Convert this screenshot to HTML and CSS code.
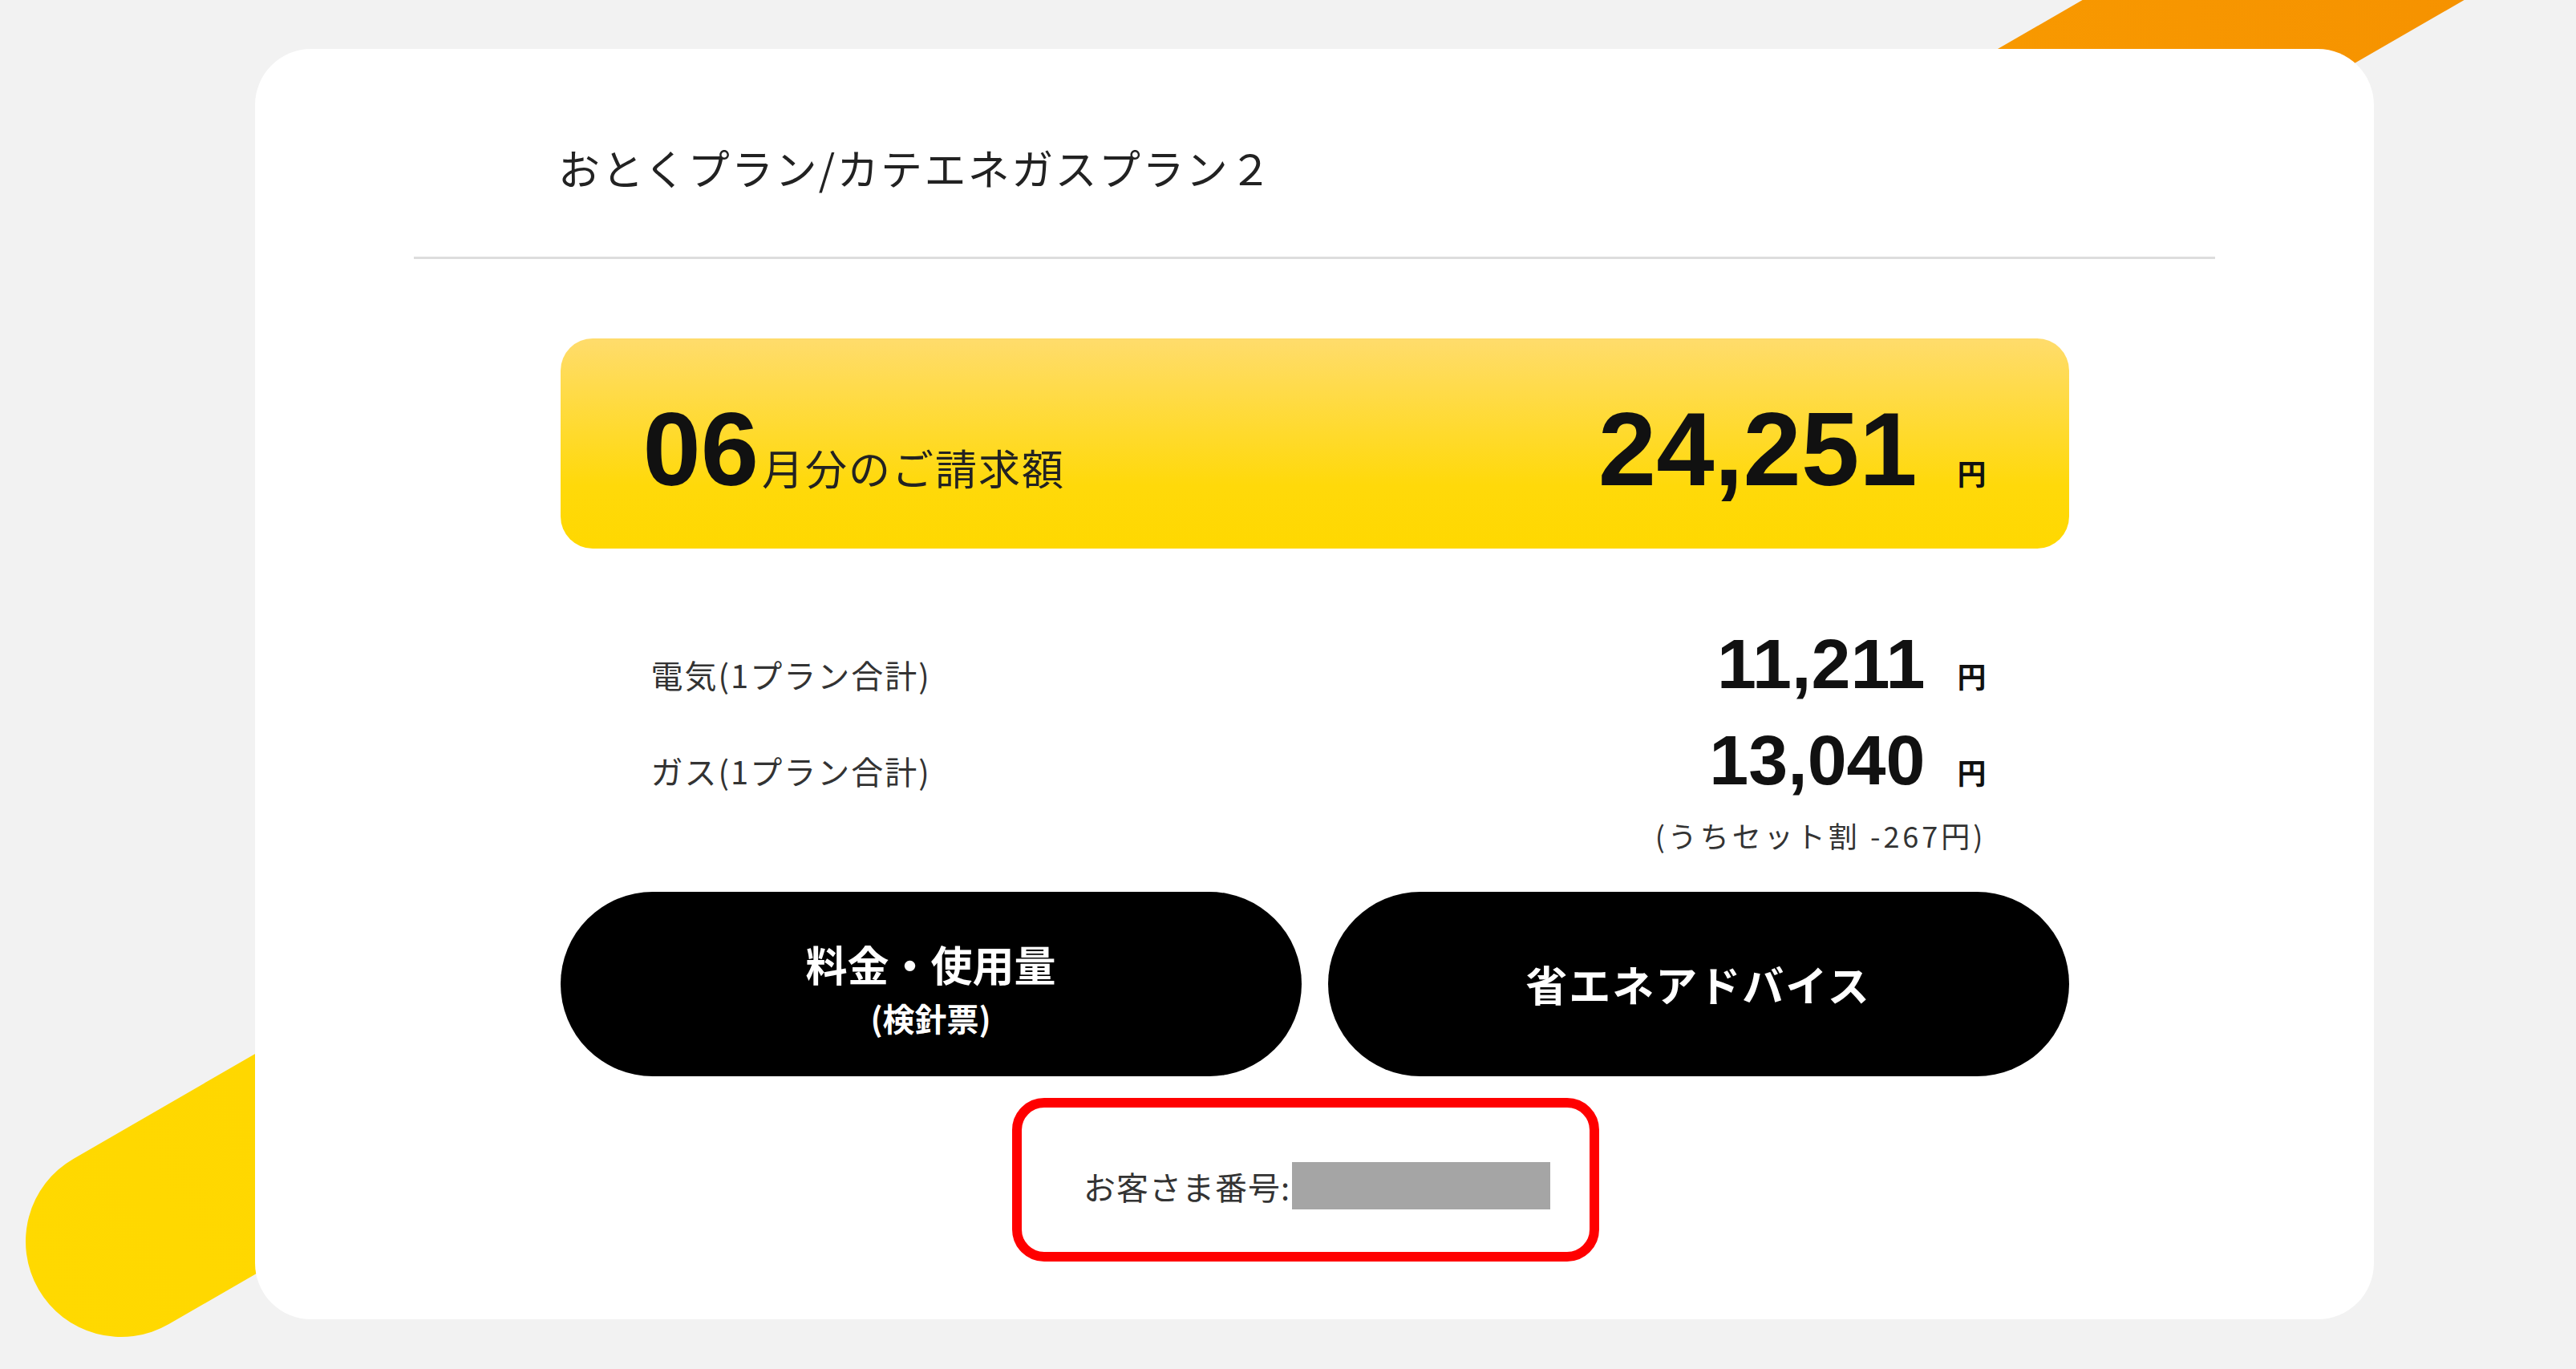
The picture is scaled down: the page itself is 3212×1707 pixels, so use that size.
FILE: index.html
```html
<!DOCTYPE html>
<html lang="ja">
<head>
<meta charset="utf-8">
<title>ご請求額</title>
<link rel="stylesheet" href="styles.css">
</head>
<body>
<div class="page">
  <div class="band band-yellow"></div>
  <div class="band band-orange"></div>
  <main class="card">
    <header class="card-head">
      <h1 class="plan-title">おとくプラン/カテエネガスプラン２</h1>
    </header>
    <section class="content">
      <div class="total">
        <div class="total-month"><span class="month-num">06</span><span class="month-label">月分のご請求額</span></div>
        <div class="total-amount"><span class="amount-big">24,251</span><span class="yen yen-big">円</span></div>
      </div>
      <div class="rows">
        <div class="row">
          <span class="row-label">電気(1プラン合計)</span>
          <span class="row-amount"><span class="amount-mid">11,211</span><span class="yen yen-mid">円</span></span>
        </div>
        <div class="row">
          <span class="row-label">ガス(1プラン合計)</span>
          <span class="row-amount"><span class="amount-mid">13,040</span><span class="yen yen-mid">円</span></span>
        </div>
        <div class="note">(うちセット割 -267円)</div>
      </div>
      <div class="buttons">
        <a class="btn" href="#"><span class="btn-main">料金・使用量</span><span class="btn-sub">(検針票)</span></a>
        <a class="btn" href="#"><span class="btn-single">省エネアドバイス</span></a>
      </div>
      <div class="customer-wrap">
        <div class="customer"><span class="customer-label">お客さま番号:</span><span class="redact"></span></div>
      </div>
    </section>
  </main>
</div>
</body>
</html>
```

FILE: styles.css
```css
html, body {
  margin: 0;
  padding: 0;
  background: #f2f2f2;
}

body {
  font-family: "Noto Sans CJK JP", "Noto Sans", sans-serif;
  color: #333;
}

.page {
  position: relative;
  width: 100%;
  height: 1707px;
  overflow: hidden;
  background: #f2f2f2;
  padding-top: 61px;
  box-sizing: border-box;
}

.band {
  position: absolute;
  height: 238px;
  border-radius: 119px;
  z-index: 0;
}

.band-yellow {
  left: 32px;
  top: 1429px;
  width: 900px;
  transform-origin: 119px 119px;
  transform: rotate(-30deg);
  background: linear-gradient(90deg, #ffd900, #ffd400);
}

.band-orange {
  left: 2315px;
  top: 181px;
  width: 1000px;
  transform-origin: 0 50%;
  transform: rotate(-30deg);
  background: linear-gradient(90deg, #f99c00, #f59000);
}

.card {
  position: relative;
  z-index: 1;
  display: block;
  margin-left: 318px;
  width: 2642px;
  height: 1584px;
  box-sizing: border-box;
  padding: 108px 198px 0;
  background: #fff;
  border-radius: 70px;
}

.card-head {
  padding: 0 0 71px 180px;
  border-bottom: 3px solid #dddddd;
}

.plan-title {
  margin: 0;
  font-size: 52px;
  line-height: 80px;
  font-weight: 400;
  letter-spacing: 2.4px;
  color: #222;
}

.content {
  width: 1881px;
  margin: 0 auto;
}

.total {
  margin-top: 99px;
  height: 262px;
  box-sizing: border-box;
  padding: 14px 103px 0;
  border-radius: 40px;
  background: linear-gradient(180deg, #ffdc6c 0%, #ffd90a 70%, #ffd800 100%);
  display: flex;
  justify-content: space-between;
  align-items: center;
}

.total-month,
.total-amount {
  font-family: "Liberation Sans", Arial, sans-serif;
  font-weight: 700;
  font-size: 130px;
  line-height: 130px;
  color: #111;
  white-space: nowrap;
}

.month-label {
  font-family: "Noto Sans CJK JP", sans-serif;
  font-weight: 400;
  font-size: 52px;
  line-height: 1;
  letter-spacing: 2px;
  margin-left: 4px;
  color: #222;
}

.yen {
  font-family: "Noto Sans CJK JP", sans-serif;
  font-weight: 700;
  font-size: 36px;
  line-height: 1;
}

.yen-big {
  margin-left: 50px;
}

.rows {
  margin-top: 84px;
  padding: 0 103px 0 113px;
}

.row {
  display: flex;
  justify-content: space-between;
  align-items: baseline;
  height: 120px;
}

.row-label {
  font-size: 40px;
  line-height: 1;
  letter-spacing: 2px;
  color: #333;
}

.row-amount {
  font-family: "Liberation Sans", Arial, sans-serif;
  font-weight: 700;
  font-size: 88px;
  line-height: 120px;
  color: #111;
  white-space: nowrap;
}

.yen-mid {
  margin-left: 40px;
}

.note {
  margin-top: 3px;
  text-align: right;
  font-size: 36px;
  line-height: 60px;
  letter-spacing: 4px;
  color: #333;
}

.buttons {
  margin-top: 41px;
  display: grid;
  grid-template-columns: 1fr 1fr;
  gap: 33px;
}

.btn {
  height: 230px;
  border-radius: 115px;
  background: #000;
  color: #fff;
  text-decoration: none;
  display: flex;
  flex-direction: column;
  justify-content: center;
  align-items: center;
  font-weight: 700;
}

.btn-main {
  font-size: 52px;
  line-height: 84px;
  letter-spacing: 0;
}

.btn-sub {
  font-size: 40px;
  line-height: 50px;
}

.btn-single {
  font-size: 52px;
  line-height: 84px;
  letter-spacing: 2px;
}

.customer-wrap {
  margin-top: 27px;
  display: flex;
  justify-content: center;
}

.customer {
  width: 732px;
  height: 204px;
  box-sizing: border-box;
  margin-right: 22px;
  border: 12px solid #ff0000;
  border-radius: 40px;
  padding: 15px 0 0 77px;
  display: flex;
  align-items: center;
}

.customer-label {
  font-size: 40px;
  line-height: 1;
  letter-spacing: 1px;
  color: #333;
}

.redact {
  display: block;
  width: 322px;
  height: 59px;
  margin-left: 2px;
  background: #a5a5a5;
}
```
